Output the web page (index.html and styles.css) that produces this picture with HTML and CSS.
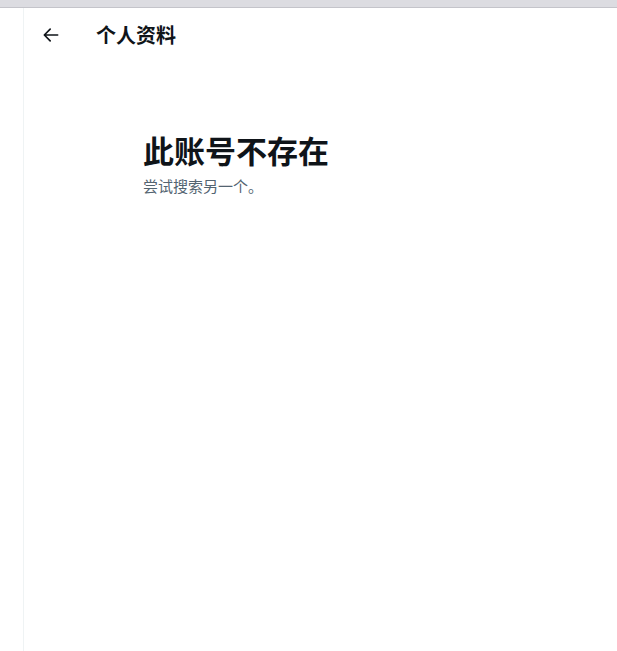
FILE: index.html
```html
<!DOCTYPE html>
<html lang="zh">
<head>
<meta charset="utf-8">
<link rel="stylesheet" href="styles.css">
</head>
<body>
<div class="topbar"></div>
<div class="page">
  <div class="main">
    <header class="header">
      <button class="back" aria-label="返回">
        <svg width="20" height="20" viewBox="0 0 24 24"><path d="M20 12H4.5M11 5l-7 7 7 7" fill="none" stroke="#0f1419" stroke-width="2" stroke-linecap="round" stroke-linejoin="round"/></svg>
      </button>
      <h2 class="title">个人资料</h2>
    </header>
    <section class="empty">
      <h1 class="empty-title">此账号不存在</h1>
      <p class="empty-sub">尝试搜索另一个。</p>
    </section>
  </div>
</div>
</body>
</html>
```
FILE: styles.css
```css
html, body { margin: 0; padding: 0; background: #fff; }
body {
  font-family: "Noto Sans CJK SC", "Noto Sans", sans-serif;
  color: #0f1419;
  width: 617px;
  height: 651px;
  overflow: hidden;
}
.topbar {
  height: 7px;
  background: #dcdce1;
  border-bottom: 1px solid #c4c4ca;
}
.page {
  padding-left: 23px;
  height: 643px;
}
.main {
  border-left: 1px solid #eff3f4;
  height: 100%;
}
.header {
  display: flex;
  align-items: center;
  height: 53px;
  padding-left: 16px;
}
.back {
  width: 22px;
  height: 22px;
  padding: 0;
  border: 0;
  background: none;
  display: flex;
  align-items: center;
  justify-content: center;
  margin-right: 34px;
}
.title {
  margin: 0;
  font-size: 20px;
  font-weight: 700;
  line-height: 24px;
}
.empty {
  padding: 71px 0 0 119px;
}
.empty-title {
  margin: 0;
  font-size: 31px;
  font-weight: 700;
  line-height: 36px;
}
.empty-sub {
  margin: 8px 0 0;
  font-size: 15px;
  line-height: 20px;
  color: #536471;
}
```
